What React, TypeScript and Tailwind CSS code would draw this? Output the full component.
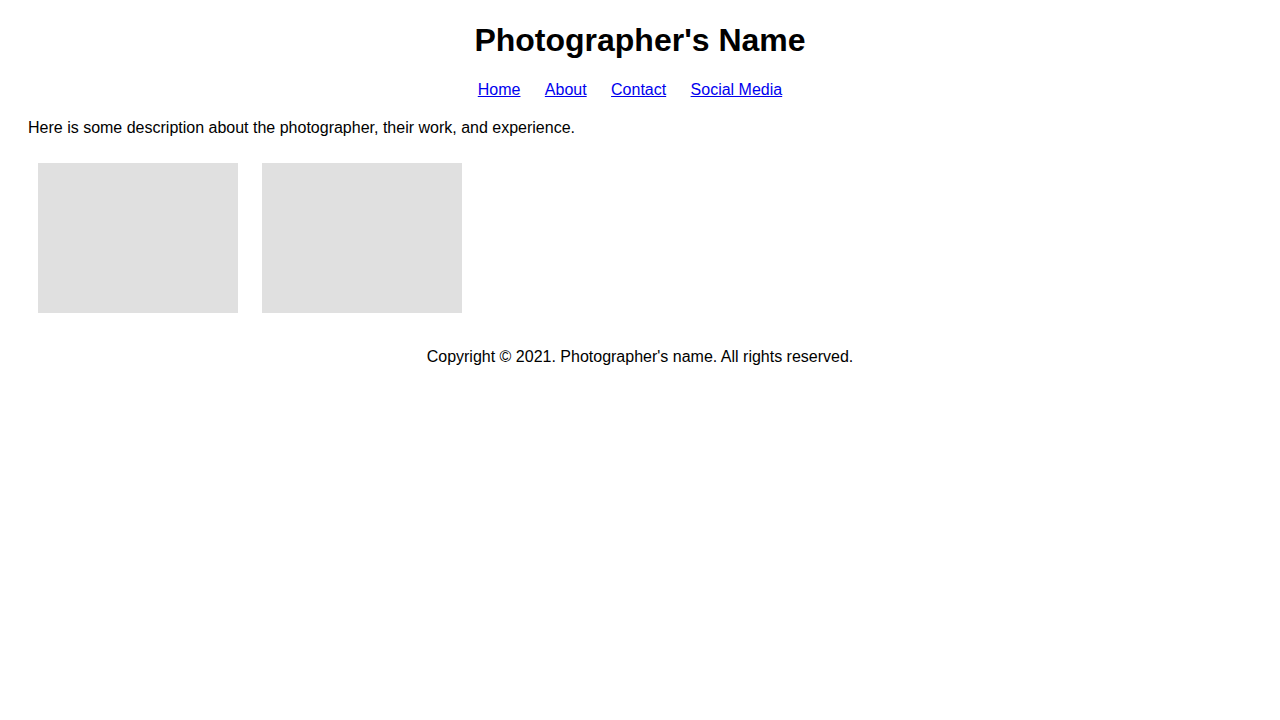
export default function App() {
  const links = ["Home", "About", "Contact", "Social Media"];
  return (
    <div className="min-h-[720px] bg-white px-[28px] font-['Liberation_Sans',Arial,sans-serif] text-black">
      <header className="text-center">
        <h1 className="mt-[22.44px] mb-[21.44px] text-[32px] font-bold leading-[36.8px]">
          Photographer's Name
        </h1>
        <nav className="flex justify-center gap-[24.4px] pr-[20px] text-[16px] leading-[18.4px]">
          {links.map((l) => (
            <a key={l} href="#" className="text-[#0000ee] underline">
              {l}
            </a>
          ))}
        </nav>
      </header>
      <main>
        <p className="mt-[19.7px] text-[16px] leading-[18.4px]">
          Here is some description about the photographer, their work, and experience.
        </p>
        <div className="mt-[25.8px] flex gap-[24px] pl-[10px]">
          <div className="h-[150px] w-[200px] bg-[#e0e0e0]" />
          <div className="h-[150px] w-[200px] bg-[#e0e0e0]" />
        </div>
      </main>
      <footer className="mt-[35px] text-center text-[16px] leading-[18.4px]">
        Copyright © 2021. Photographer's name. All rights reserved.
      </footer>
    </div>
  );
}
